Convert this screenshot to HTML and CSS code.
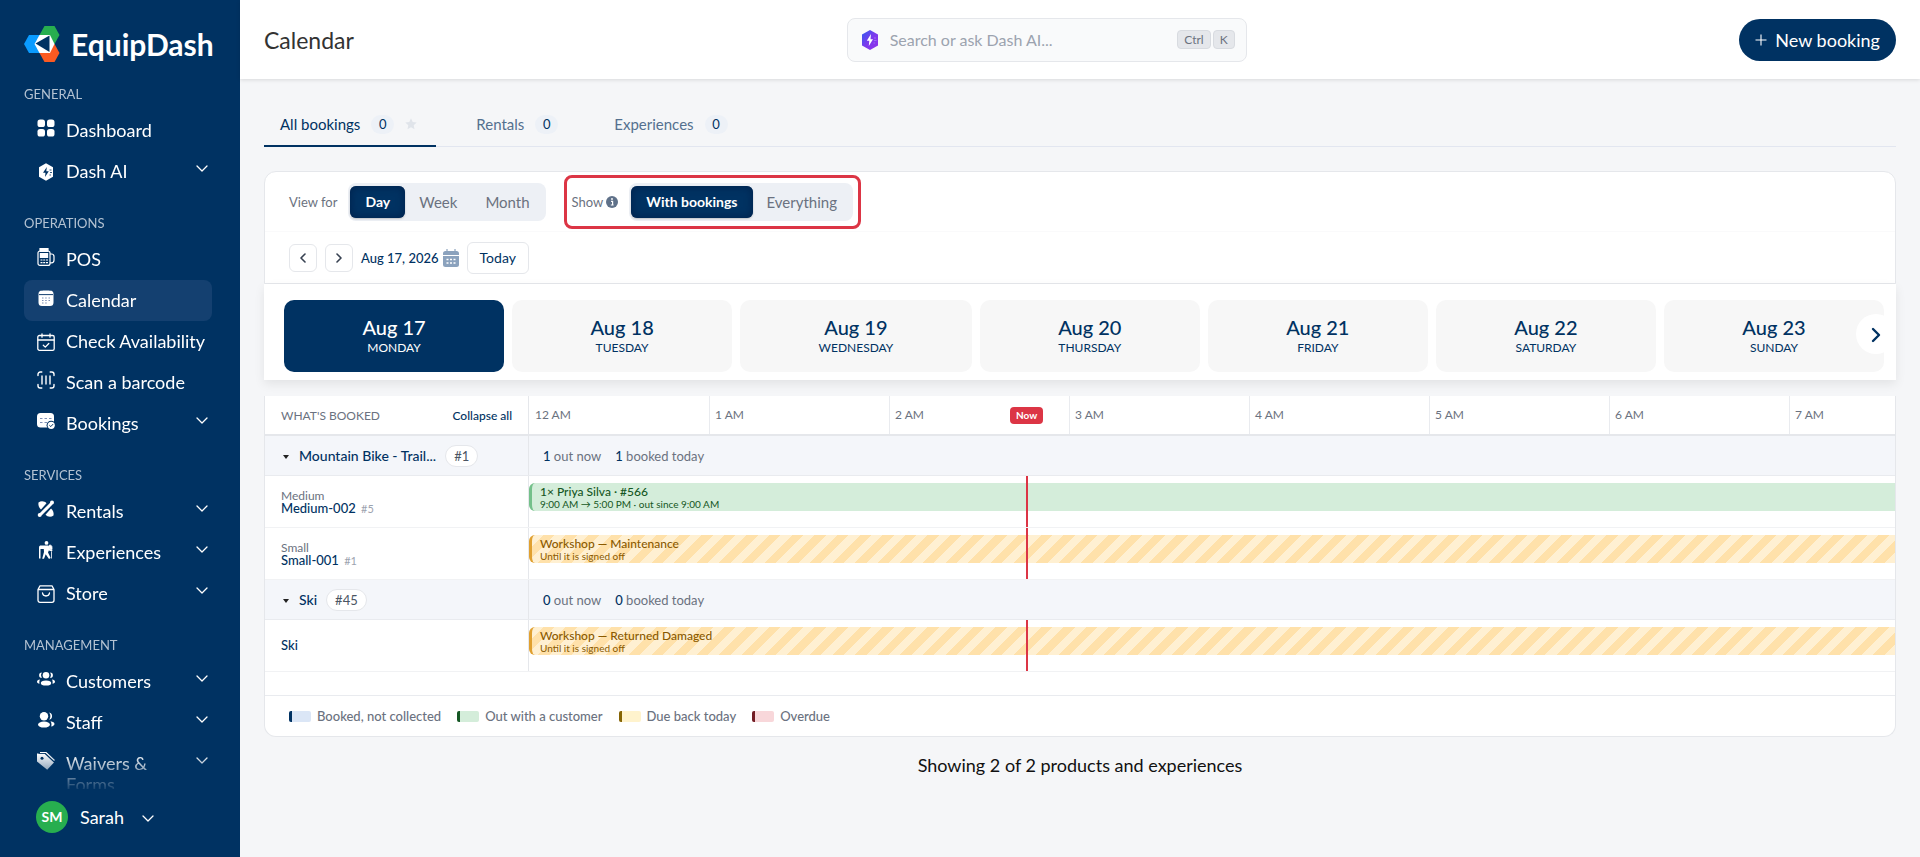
FILE: index.html
```html
<!DOCTYPE html>
<html lang="en">
<head>
  <meta charset="UTF-8" />
  <meta name="viewport" content="width=device-width, initial-scale=1" />
  <title>Calendar - EquipDash</title>
  <link rel="stylesheet" href="styles.css">
</head>
<body>
  <!-- shared icons -->
  <svg class="sprite" aria-hidden="true">
    <symbol id="chev-down" viewBox="0 0 12 12"><path d="M1 3l5 5 5-5" fill="none" stroke="currentColor" stroke-width="1.3" stroke-linecap="round" stroke-linejoin="round"/></symbol>
    <symbol id="chev-left" viewBox="0 0 12 12"><path d="M8 2L4 6l4 4" fill="none" stroke="currentColor" stroke-width="1.6" stroke-linecap="round" stroke-linejoin="round"/></symbol>
    <symbol id="chev-right" viewBox="0 0 12 12"><path d="M4 2l4 4-4 4" fill="none" stroke="currentColor" stroke-width="1.6" stroke-linecap="round" stroke-linejoin="round"/></symbol>
  </svg>

  <aside class="sidebar">
    <a class="brand" href="#">
      <svg class="brand-mark" viewBox="0 0 36 36" aria-hidden="true">
        <path d="M20.500 0h10l5 9-5 9h-10l-5-9z" fill="#27ae4f"/>
        <path d="M20.500 18h10l5 9-5 9h-10l-5-9z" fill="#fb5a22"/>
        <path d="M5 9h11l5 9-5 9H5l-5-9z" fill="#0a9bff"/>
        <path d="M15.500 9h10.500l4.500 9-4.500 9H15.500l-5-9z" fill="#fff"/>
        <path d="M11.500 17.500L25.500 9.500v16.500z" fill="#003262"/>
      </svg>
      <span>EquipDash</span>
    </a>

    <nav class="side-nav">
      <h2>General</h2>
      <a class="nav-link" href="#">
        <svg class="nav-icon" viewBox="0 0 18 18" fill="currentColor"><rect x=".5" y=".5" width="7.500" height="7.500" rx="2.600"/><rect x="10" y=".5" width="7.500" height="7.500" rx="2.600"/><rect x=".5" y="10" width="7.500" height="7.500" rx="2.600"/><rect x="10" y="10" width="7.500" height="7.500" rx="2.600"/></svg>
        <span>Dashboard</span>
      </a>
      <a class="nav-link has-caret" href="#">
        <svg class="nav-icon level" viewBox="0 0 18 18"><path d="M9 .3l7 4v9.400l-7 4-7-4V4.300z" fill="currentColor"/><path d="M9.800 4L6 9.800h2.500L8 14l3.800-5.800H9.300z" fill="#003262"/><path d="M12.500 7h2M13 9.500h2M12.500 12h1.500" stroke="#003262" stroke-width=".8"/></svg>
        <span>Dash AI</span>
        <svg class="caret"><use href="#chev-down"/></svg>
      </a>

      <h2>Operations</h2>
      <a class="nav-link" href="#">
        <svg class="nav-icon" viewBox="0 0 18 18" fill="none" stroke="currentColor" stroke-width="1.200"><path d="M3 3.500V.6h8v2.900z" fill="currentColor"/><rect x="1" y="3" width="12" height="14.400" rx="2"/><path d="M13 6h1.500A2.500 2.500 0 0 1 17 8.500v3.800a2.500 2.500 0 0 1-2.500 2.500H13"/><path d="M3.400 5.500h7.200v3.800H3.400z" fill="currentColor"/><path d="M3.500 12h2M6.200 12h2M9 12h2M3.500 14.700h2M6.200 14.700h2M9 14.700h2"/></svg>
        <span>POS</span>
      </a>
      <a class="nav-link active" href="#" aria-current="page">
        <svg class="nav-icon" viewBox="0 0 18 18"><path d="M1.500 6.500V5A3.500 3.500 0 0 1 5 1.500h8A3.500 3.500 0 0 1 16.500 5v8.500A3.500 3.500 0 0 1 13 17H5a3.500 3.500 0 0 1-3.500-3.500z" fill="currentColor"/><path d="M2 5.600h14M5 0v1.600M13 0v1.600" stroke="#144070" stroke-width="1"/><path d="M5 9h1.500M8.200 9h1.500M11.500 9H13M5 11.500h1.500M8.200 11.500h1.500M11.500 11.500H13M5 14h1.500M8.200 14h1.500" stroke="#7d8fb5" stroke-width="1.100"/></svg>
        <span>Calendar</span>
      </a>
      <a class="nav-link" href="#">
        <svg class="nav-icon level" viewBox="0 0 18 18" fill="none" stroke="currentColor" stroke-width="1.300" stroke-linecap="round" stroke-linejoin="round"><rect x=".8" y="2.500" width="16.400" height="14.800" rx="1.600"/><path d="M1 7h16M5 .8v3.400M13 .8v3.400M6.300 12.200l2 1.900 3.500-3.600"/></svg>
        <span>Check Availability</span>
      </a>
      <a class="nav-link" href="#">
        <svg class="nav-icon" viewBox="0 0 18 18" fill="none" stroke="currentColor" stroke-width="1.400" stroke-linecap="round"><path d="M1 4.500V3.200A2.200 2.200 0 0 1 3.200 1h1.600M13.200 1h1.600A2.200 2.200 0 0 1 17 3.200v1.300M17 13.500v1.300a2.200 2.200 0 0 1-2.200 2.200h-1.600M4.800 17H3.200A2.200 2.200 0 0 1 1 14.800v-1.300M5 5v8M9 5v8M13 5v8"/></svg>
        <span>Scan a barcode</span>
      </a>
      <a class="nav-link has-caret" href="#">
        <svg class="nav-icon" viewBox="0 0 18 18"><rect x="0" y="1" width="17" height="14.500" rx="3.500" fill="currentColor"/><path d="M3 6.500h2.500M7.500 6.500H10M12 6.500h2.500M3 10.500h2.500M7.500 10.500H10" stroke="#7d8fb5" stroke-width="1"/><circle cx="14.200" cy="13.300" r="4.600" fill="#003262"/><circle cx="14.200" cy="13.300" r="3.600" fill="currentColor"/><path d="M12.400 13.300l1.400 1.300 2.300-2.500" fill="none" stroke="#003262" stroke-width="1"/></svg>
        <span>Bookings</span>
        <svg class="caret"><use href="#chev-down"/></svg>
      </a>

      <h2>Services</h2>
      <a class="nav-link has-caret" href="#">
        <svg class="nav-icon" viewBox="0 0 18 18" fill="currentColor"><path d="M1.500 2.500C4 .5 7.500 1 9.500 3.200L4 9.500C1.800 7.500 1 5 1.500 2.500z"/><path d="M16.500 15.500c-2.500 2-6 1.500-8-.7l5.500-6.300c2.200 2 3 4.500 2.500 7z"/><path d="M3.500 14.500L14.500 3.500" stroke="currentColor" stroke-width="3"/><circle cx="15" cy="2.500" r="2"/><circle cx="2.700" cy="15" r="2"/><path d="M3.500 11.500L11.500 3.500M6.500 15L15 6.500" stroke="#003262" stroke-width=".9"/></svg>
        <span>Rentals</span>
        <svg class="caret"><use href="#chev-down"/></svg>
      </a>
      <a class="nav-link has-caret" href="#">
        <svg class="nav-icon" viewBox="0 0 18 18" fill="currentColor"><circle cx="9.500" cy="1.900" r="1.900"/><path d="M7.800 4.500h3.400l2 3.600 2.300.8-.5 1.500-3.200-.9-.8 2 2.700 5.500-1.700 1-3.300-4.800-1.700 4.500H5.200L7 11 6.800 8H3.500v9.500H2V6.500C2 5.200 2.800 4.600 4 4.600z"/><path d="M12.500 4c1.800 0 2.500 1 2.500 2.500v2l-2-.8-1.500-2zM14.500 10.500v7" stroke="currentColor" stroke-width=".8"/></svg>
        <span>Experiences</span>
        <svg class="caret"><use href="#chev-down"/></svg>
      </a>
      <a class="nav-link has-caret" href="#">
        <svg class="nav-icon level" viewBox="0 0 18 18" fill="none" stroke="currentColor" stroke-width="1.300" stroke-linecap="round" stroke-linejoin="round"><path d="M1 4.500L3 .8h12l2 3.700v10.800a2 2 0 0 1-2 2H3a2 2 0 0 1-2-2zM1 4.500h16M5.500 8c.5 4 6.500 4 7 0"/></svg>
        <span>Store</span>
        <svg class="caret"><use href="#chev-down"/></svg>
      </a>

      <h2>Management</h2>
      <a class="nav-link has-caret" href="#">
        <svg class="nav-icon" viewBox="0 0 18 18" fill="currentColor"><circle cx="9" cy="5.300" r="3.300"/><ellipse cx="9" cy="13" rx="5.200" ry="2.600"/><path d="M4.800 2.500a2.500 2.500 0 0 0 0 5.400 5 5 0 0 1 0-5.400zM13.200 2.500a2.500 2.500 0 0 1 0 5.400 5 5 0 0 0 0-5.400zM3 9.600c-2 .2-3 1.200-3 2.200s1 1.700 2.500 2c-.3-1.600-.2-3 .5-4.200zM15 9.600c2 .2 3 1.200 3 2.200s-1 1.700-2.500 2c.3-1.600.2-3-.5-4.200z"/></svg>
        <span>Customers</span>
        <svg class="caret"><use href="#chev-down"/></svg>
      </a>
      <a class="nav-link has-caret" href="#">
        <svg class="nav-icon" viewBox="0 0 18 18" fill="currentColor"><circle cx="7" cy="5.200" r="4.200"/><ellipse cx="7" cy="13.600" rx="6" ry="3"/><path d="M12.200 1.600a3.700 3.700 0 0 1 0 7.200 6.500 6.500 0 0 0 0-7.200zM13.500 10.200c2.700.3 4 1.500 4 2.800 0 1.200-1.300 2.200-3.300 2.500.6-2 .3-3.800-.7-5.300z"/></svg>
        <span>Staff</span>
        <svg class="caret"><use href="#chev-down"/></svg>
      </a>
      <a class="nav-link has-caret" href="#">
        <svg class="nav-icon" viewBox="0 0 18 18"><path d="M0 1.500h7.500L17 10.500l-6.800 7.200L0 9.500z" fill="currentColor"/><path d="M3 .5h6l8.500 8" fill="none" stroke="currentColor" stroke-width="1.200"/><path d="M1.500 1.500h6.500l9.500 9" fill="none" stroke="#003262" stroke-width=".8"/><circle cx="5" cy="6.300" r="1.500" fill="#003262"/></svg>
        <span>Waivers &amp; Forms</span>
        <svg class="caret"><use href="#chev-down"/></svg>
      </a>
    </nav>

    <button class="user-menu" type="button">
      <span class="avatar">SM</span>
      <span>Sarah</span>
      <svg class="caret"><use href="#chev-down"/></svg>
    </button>
  </aside>

  <div class="page">
    <header class="topbar">
      <h1>Calendar</h1>
      <label class="search">
        <svg class="search-icon" viewBox="0 0 18 20" aria-hidden="true">
          <defs><linearGradient id="ai" x1="0" y1="0" x2="1" y2="1"><stop offset="0" stop-color="#2f5cf0"/><stop offset=".5" stop-color="#7c3aed"/><stop offset="1" stop-color="#9333ea"/></linearGradient></defs>
          <path d="M9 0l8 4.500v11L9 20l-8-4.500v-11z" fill="url(#ai)"/>
          <path d="M10 4L5.800 10.800h2.500L7.800 16 12 9.200H9.500z" fill="#fff"/>
          <path d="M13 8h2M13 10.500h2.500M12.500 13h1.500" stroke="#a678f5" stroke-width=".8"/>
        </svg>
        <input type="search" placeholder="Search or ask Dash AI..." aria-label="Search or ask Dash AI">
        <span class="keys"><kbd>Ctrl</kbd><kbd>K</kbd></span>
      </label>
      <button class="new-booking" type="button">
        <svg viewBox="0 0 12 12" aria-hidden="true"><path d="M6 .5v11M.5 6h11" stroke="currentColor" stroke-width="1.100"/></svg>
        New booking
      </button>
    </header>

    <main>
      <div class="tabs" role="tablist">
        <button class="tab active" type="button" role="tab" aria-selected="true">All bookings <span class="count">0</span>
          <svg class="star" viewBox="0 0 12 12"><path d="M6 .3l1.700 3.700 4 .5-3 2.800.8 4L6 9.300l-3.500 2 .8-4-3-2.800 4-.5z" fill="currentColor"/></svg>
        </button>
        <button class="tab" type="button" role="tab">Rentals <span class="count">0</span></button>
        <button class="tab" type="button" role="tab">Experiences <span class="count">0</span></button>
      </div>

      <section class="toolbar">
        <div class="toolbar-row filters">
          <div class="filter">
            <span class="filter-label">View for</span>
            <div class="segmented">
              <button class="on" type="button">Day</button>
              <button type="button">Week</button>
              <button type="button">Month</button>
            </div>
          </div>
          <div class="filter highlighted">
            <span class="filter-label">Show
              <svg viewBox="0 0 12 12"><circle cx="6" cy="6" r="6" fill="#5f7189"/><path d="M5 5.300h1.600v3.500M4.800 9h2.800" fill="none" stroke="#fff" stroke-width="1.200"/><circle cx="6" cy="3" r=".9" fill="#fff"/></svg>
            </span>
            <div class="segmented">
              <button class="on" type="button">With bookings</button>
              <button type="button">Everything</button>
            </div>
          </div>
        </div>
        <div class="toolbar-row dates">
          <button class="step" type="button" aria-label="Previous day"><svg><use href="#chev-left"/></svg></button>
          <button class="step" type="button" aria-label="Next day"><svg><use href="#chev-right"/></svg></button>
          <button class="date-pick" type="button">Aug 17, 2026
            <svg viewBox="0 0 16 18"><path d="M0 6V4.500A2.500 2.500 0 0 1 2.500 2h11A2.500 2.500 0 0 1 16 4.500V6z" fill="#8ba2bd"/><path d="M4 0v3M12 0v3" stroke="#8ba2bd" stroke-width="1.200"/><path d="M0 7h16v8.500a2.500 2.500 0 0 1-2.500 2.500h-11A2.500 2.500 0 0 1 0 15.500z" fill="#8ba2bd"/><path d="M3.500 10.500h2M7 10.500h2M10.500 10.500h2M3.500 14h2M7 14h2M10.500 14h2" stroke="#fff" stroke-width="1.500"/></svg>
          </button>
          <button class="today" type="button">Today</button>
        </div>
      </section>

      <div class="day-strip">
        <div class="days">
          <button class="day selected" type="button"><b>Aug 17</b><span>Monday</span></button>
          <button class="day" type="button"><b>Aug 18</b><span>Tuesday</span></button>
          <button class="day" type="button"><b>Aug 19</b><span>Wednesday</span></button>
          <button class="day" type="button"><b>Aug 20</b><span>Thursday</span></button>
          <button class="day" type="button"><b>Aug 21</b><span>Friday</span></button>
          <button class="day" type="button"><b>Aug 22</b><span>Saturday</span></button>
          <button class="day" type="button"><b>Aug 23</b><span>Sunday</span></button>
          <button class="next-days" type="button" aria-label="Later days"><svg><use href="#chev-right"/></svg></button>
        </div>
      </div>

      <section class="timeline">
        <div class="line head">
          <div class="side"><span class="what">What's booked</span><button type="button">Collapse all</button></div>
          <div class="track hours">
            <span>12 AM</span><span>1 AM</span><span>2 AM</span><span>3 AM</span><span>4 AM</span><span>5 AM</span><span>6 AM</span><span>7 AM</span>
            <em class="now-badge">Now</em>
          </div>
        </div>

        <div class="line group">
          <div class="side"><button type="button"><i></i><span>Mountain Bike - Trail...</span></button><span class="qty">#1</span></div>
          <div class="track"><p><b>1</b> out now</p><p><b>1</b> booked today</p></div>
        </div>
        <div class="line item">
          <div class="side"><span class="variant">Medium</span><a href="#">Medium-002 <small>#5</small></a></div>
          <div class="track now">
            <a class="bar out" href="#"><b>1× Priya Silva · #566</b><span>9:00 AM → 5:00 PM · out since 9:00 AM</span></a>
          </div>
        </div>
        <div class="line item">
          <div class="side"><span class="variant">Small</span><a href="#">Small-001 <small>#1</small></a></div>
          <div class="track now">
            <a class="bar workshop" href="#"><b>Workshop — Maintenance</b><span>Until it is signed off</span></a>
          </div>
        </div>

        <div class="line group">
          <div class="side"><button type="button"><i></i><span>Ski</span></button><span class="qty">#45</span></div>
          <div class="track"><p><b>0</b> out now</p><p><b>0</b> booked today</p></div>
        </div>
        <div class="line item">
          <div class="side"><a href="#">Ski</a></div>
          <div class="track now">
            <a class="bar workshop" href="#"><b>Workshop — Returned Damaged</b><span>Until it is signed off</span></a>
          </div>
        </div>

        <ul class="legend">
          <li class="booked">Booked, not collected</li>
          <li class="with-customer">Out with a customer</li>
          <li class="due">Due back today</li>
          <li class="overdue">Overdue</li>
        </ul>
      </section>

      <p class="summary">Showing 2 of 2 products and experiences</p>
    </main>
  </div>
</body>
</html>
```
FILE: styles.css
```css
* {
  box-sizing: border-box;
  margin: 0;
  padding: 0;
}

body {
  display: flex;
  height: 100vh;
  font-family: Lato, "Open Sans", sans-serif;
  font-size: 14px;
  background: #f5f6f8;
  color: #003262;
}

button, input {
  font: inherit;
  color: inherit;
  background: none;
  border: none;
}

button {
  cursor: pointer;
}

a {
  color: inherit;
  text-decoration: none;
}

.sprite {
  position: absolute;
  width: 0;
  height: 0;
}

/* sidebar */

.sidebar {
  display: flex;
  flex-direction: column;
  flex: 0 0 240px;
  padding: 25px 26px 24px 24px;
  background: #003262;
  color: #fff;
}

.brand {
  display: flex;
  align-items: center;
  gap: 11px;
  font-size: 30px;
  line-height: 38px;
  font-weight: bold;
}

.brand-mark {
  width: 36px;
  height: 36px;
}

.side-nav {
  flex: 1;
  min-height: 0;
  margin-right: 2px;
  overflow: hidden;
  -webkit-mask-image: linear-gradient(#000 calc(100% - 36px), rgba(0,0,0,0.1));
  mask-image: linear-gradient(#000 calc(100% - 36px), rgba(0,0,0,0.1));
}

.side-nav h2 {
  margin: 22px 0 7px;
  font-size: 13px;
  line-height: 18px;
  font-weight: normal;
  text-transform: uppercase;
  color: #b3c2d2;
}

.nav-link {
  display: flex;
  align-items: flex-start;
  gap: 11px;
  padding: 10px 4px 10px 13px;
  border-radius: 8px;
  font-size: 18px;
  line-height: 21px;
}

.nav-link.active {
  background: #144070;
}

.nav-link span {
  flex: 1;
  white-space: nowrap;
}

.nav-link.has-caret span {
  white-space: normal;
}

.nav-icon {
  flex: none;
  width: 18px;
  height: 18px;
  margin-top: -1px;
}

.nav-icon.level {
  margin-top: 2px;
}

.caret {
  flex: none;
  width: 12px;
  height: 12px;
}

.nav-link .caret {
  margin-top: 2px;
}

.user-menu {
  display: flex;
  align-items: center;
  gap: 12px;
  margin: 12px 0 0 12px;
  font-size: 18px;
}

.user-menu .caret {
  margin: 4px 0 0 6px;
}

.avatar {
  width: 32px;
  height: 32px;
  border-radius: 50%;
  background: #27ae4f;
  font-size: 14px;
  line-height: 32px;
  font-weight: bold;
}

/* top bar */

.page {
  flex: 1;
  min-width: 0;
}

.topbar {
  display: flex;
  justify-content: space-between;
  align-items: center;
  height: 79px;
  padding: 0 24px;
  background: #fff;
  box-shadow: 0 1px 4px rgba(0,0,0,0.12);
}

.topbar h1 {
  font-size: 23px;
  font-weight: normal;
  color: #333;
}

.search {
  display: flex;
  align-items: center;
  gap: 11px;
  width: 400px;
  height: 44px;
  padding: 0 11px 0 13px;
  border: 1px solid #e5e7eb;
  border-radius: 8px;
  background: #f9fafb;
}

.search-icon {
  width: 18px;
  height: 20px;
}

.search input {
  flex: 1;
  min-width: 0;
  font-size: 16px;
  outline: none;
}

.search input::placeholder {
  color: #9ca3af;
}

.keys {
  display: flex;
  gap: 2px;
}

kbd {
  padding: 0 6px;
  border: 1px solid #d8dbe0;
  border-radius: 4px;
  background: #e5e7eb;
  font-family: inherit;
  font-size: 12px;
  line-height: 17px;
  color: #6b7280;
}

.new-booking {
  display: flex;
  align-items: center;
  gap: 8px;
  height: 42px;
  padding: 0 16px;
  border-radius: 22px;
  background: #003262;
  color: #fff;
  font-size: 18px;
}

.new-booking svg {
  width: 12px;
  height: 12px;
}

main {
  padding: 24px;
}

/* tabs */

.tabs {
  display: flex;
  gap: 24px;
  border-bottom: 1px solid #e2e6f0;
}

.tab {
  display: flex;
  align-items: center;
  gap: 11px;
  height: 44px;
  margin-bottom: -1px;
  padding: 0 16px;
  border-bottom: 2px solid transparent;
  font-size: 15px;
  color: #54708f;
}

.tab.active {
  border-color: #003262;
  color: #003262;
}

.count {
  width: 23px;
  border-radius: 10px;
  background: #edf1f7;
  font-size: 13px;
  line-height: 19px;
  color: #003262;
}

.star {
  width: 12px;
  height: 12px;
  margin-right: 3px;
  color: #e0e4ea;
}

/* toolbar */

.toolbar {
  margin-top: 24px;
  border: 1px solid #e5e7eb;
  border-radius: 12px 12px 0 0;
  background: #fff;
}

.toolbar-row {
  display: flex;
  align-items: center;
  padding: 0 24px;
}

.filters {
  gap: 18px;
  height: 60px;
  border-bottom: 1px solid #fafafb;
}

.filter {
  display: flex;
  align-items: center;
  gap: 11px;
}

.filter-label {
  display: flex;
  align-items: center;
  gap: 3px;
  font-size: 13px;
  color: #6b7280;
}

.filter-label svg {
  width: 12px;
  height: 12px;
}

.highlighted {
  height: 54px;
  padding: 0 5px;
  border: 3px solid #dc3545;
  border-radius: 8px;
}

.segmented {
  display: flex;
  padding: 3px 2px;
  border-radius: 8px;
  background: #edf0f5;
}

.segmented button {
  height: 32px;
  padding: 0 14px;
  border-radius: 6px;
  font-size: 15px;
  color: #6b7280;
}

.segmented button.on {
  padding: 0 15px;
  background: #003262;
  box-shadow: inset 0 0 8px #00204a, 0 1px 2px rgba(0,0,0,0.2);
  color: #fff;
  font-size: 14px;
  font-weight: bold;
}

.dates {
  gap: 8px;
  height: 51px;
}

.step {
  display: flex;
  align-items: center;
  justify-content: center;
  width: 28px;
  height: 28px;
  border: 1px solid #e5e7eb;
  border-radius: 6px;
  color: #374151;
}

.step svg {
  width: 12px;
  height: 12px;
}

.date-pick {
  display: flex;
  align-items: center;
  gap: 4px;
  font-size: 13px;
  font-weight: 500;
}

.date-pick svg {
  width: 16px;
  height: 18px;
}

.today {
  height: 32px;
  padding: 0 12px;
  border: 1px solid #e5e7eb;
  border-radius: 6px;
}

/* day strip */

.day-strip {
  padding: 16px 12px 8px 20px;
  background: #fff;
  box-shadow: 0 4px 10px rgba(0,0,0,0.08);
}

.days {
  display: flex;
  gap: 8px;
  position: relative;
  overflow: hidden;
}

.day {
  flex: 1 1 auto;
  display: flex;
  flex-direction: column;
  align-items: center;
  justify-content: center;
  height: 72px;
  border-radius: 10px;
  background: #f7f7f7;
}

.day b {
  font-size: 20px;
  line-height: 24px;
  font-weight: 500;
}

.day span {
  font-size: 12px;
  line-height: 18px;
  text-transform: uppercase;
}

.day.selected {
  background: #003262;
  color: #fff;
}

.next-days {
  position: absolute;
  top: 14px;
  right: -12px;
  width: 40px;
  height: 40px;
  border-radius: 50%;
  background: #fff;
}

.next-days svg {
  width: 18px;
  height: 18px;
  vertical-align: middle;
}

/* timeline */

.timeline {
  margin-top: 16px;
  border: 1px solid #e5e7eb;
  border-top: none;
  border-radius: 0 0 12px 12px;
  background: #fff;
}

.line {
  display: flex;
}

.side {
  flex: 0 0 264px;
  display: flex;
  align-items: center;
  padding: 0 16px;
  border-right: 1px solid #e5e7eb;
}

.track {
  flex: 1;
  min-width: 0;
  position: relative;
  overflow: hidden;
}

.head {
  height: 40px;
  border-bottom: 2px solid #e5e7eb;
}

.head .side {
  justify-content: space-between;
  color: #6b7280;
}

.what {
  font-size: 12px;
  text-transform: uppercase;
}

.head button {
  font-size: 12px;
  font-weight: 500;
  color: #003262;
}

.hours {
  display: flex;
}

.hours span {
  flex: 0 0 180px;
  padding-left: 5px;
  border-left: 1px solid #e9ebef;
  font-size: 12px;
  line-height: 38px;
  color: #6b7280;
}

.hours span:first-child {
  border-color: transparent;
}

.now-badge {
  position: absolute;
  top: 11px;
  left: 481px;
  padding: 0 6px;
  border-radius: 4px;
  background: #dc3545;
  color: #fff;
  font-size: 10px;
  line-height: 17px;
  font-style: normal;
  font-weight: bold;
}

.group {
  height: 40px;
  border-bottom: 1px solid #e9ebef;
  background: #f4f6fa;
}

.group .side {
  gap: 9px;
}

.group .side button {
  display: flex;
  align-items: center;
  gap: 10px;
  font-size: 14px;
  font-weight: 500;
  white-space: nowrap;
}

.group .side i {
  margin: 2px 0 0 2px;
  border: 3px solid transparent;
  border-top: 4px solid #222;
  border-bottom: none;
}

.qty {
  padding: 0 8px;
  border: 1px solid #e5e7eb;
  border-radius: 12px;
  background: #fff;
  font-size: 13px;
  line-height: 20px;
  color: #4b5563;
}

.group .track {
  display: flex;
  align-items: center;
  gap: 14px;
  padding-left: 14px;
  font-size: 13px;
  color: #6b7280;
}

.group .track b {
  font-weight: 500;
  color: #003262;
}

.item {
  height: 52px;
  border-bottom: 1px solid #f1f2f4;
}

.item .side {
  flex-direction: column;
  align-items: flex-start;
  justify-content: center;
  font-size: 13px;
  line-height: 13px;
  font-weight: 500;
}

.variant {
  font-size: 12px;
  font-weight: normal;
  color: #6b7280;
}

.item small {
  margin-left: 2px;
  font-size: 11px;
  font-weight: normal;
  color: #9ca3af;
}

.now::after {
  content: "";
  position: absolute;
  top: 0;
  bottom: 0;
  left: 497px;
  width: 2px;
  background: #dc3545;
}

.bar {
  display: flex;
  flex-direction: column;
  height: 28px;
  margin-top: 7px;
  padding: 3px 8px;
  border-left: 3px solid;
  border-radius: 6px 0 0 6px;
  line-height: 12px;
}

.bar b {
  font-size: 12px;
  font-weight: 500;
}

.bar span {
  font-size: 10px;
}

.bar.out {
  border-color: #74c08a;
  background: #d4edda;
  color: #155724;
}

.bar.workshop {
  border-color: #e0a030;
  background: repeating-linear-gradient(135deg, #fff0d2 0 8px, #ffe1aa 8px 16px);
  color: #8a5a00;
}

.legend {
  display: flex;
  gap: 16px;
  margin-top: 23px;
  padding: 0 24px;
  border-top: 1px solid #e9ebef;
  list-style: none;
  font-size: 13px;
  line-height: 40px;
  font-weight: 500;
  color: #6b7280;
}

.legend li {
  display: flex;
  align-items: center;
  gap: 6px;
}

.legend li::before {
  content: "";
  box-sizing: border-box;
  width: 22px;
  height: 11px;
  border-left: 3px solid;
  border-radius: 2px;
}

.legend .booked::before {
  border-color: #003262;
  background: #dbe6f6;
}

.legend .with-customer::before {
  border-color: #155724;
  background: #d4edda;
}

.legend .due::before {
  border-color: #856404;
  background: #fff3cd;
}

.legend .overdue::before {
  border-color: #721c24;
  background: #f8d7da;
}

.summary {
  margin-top: 18px;
  font-size: 18px;
  line-height: 20px;
  text-align: center;
  color: #111;
}
```
